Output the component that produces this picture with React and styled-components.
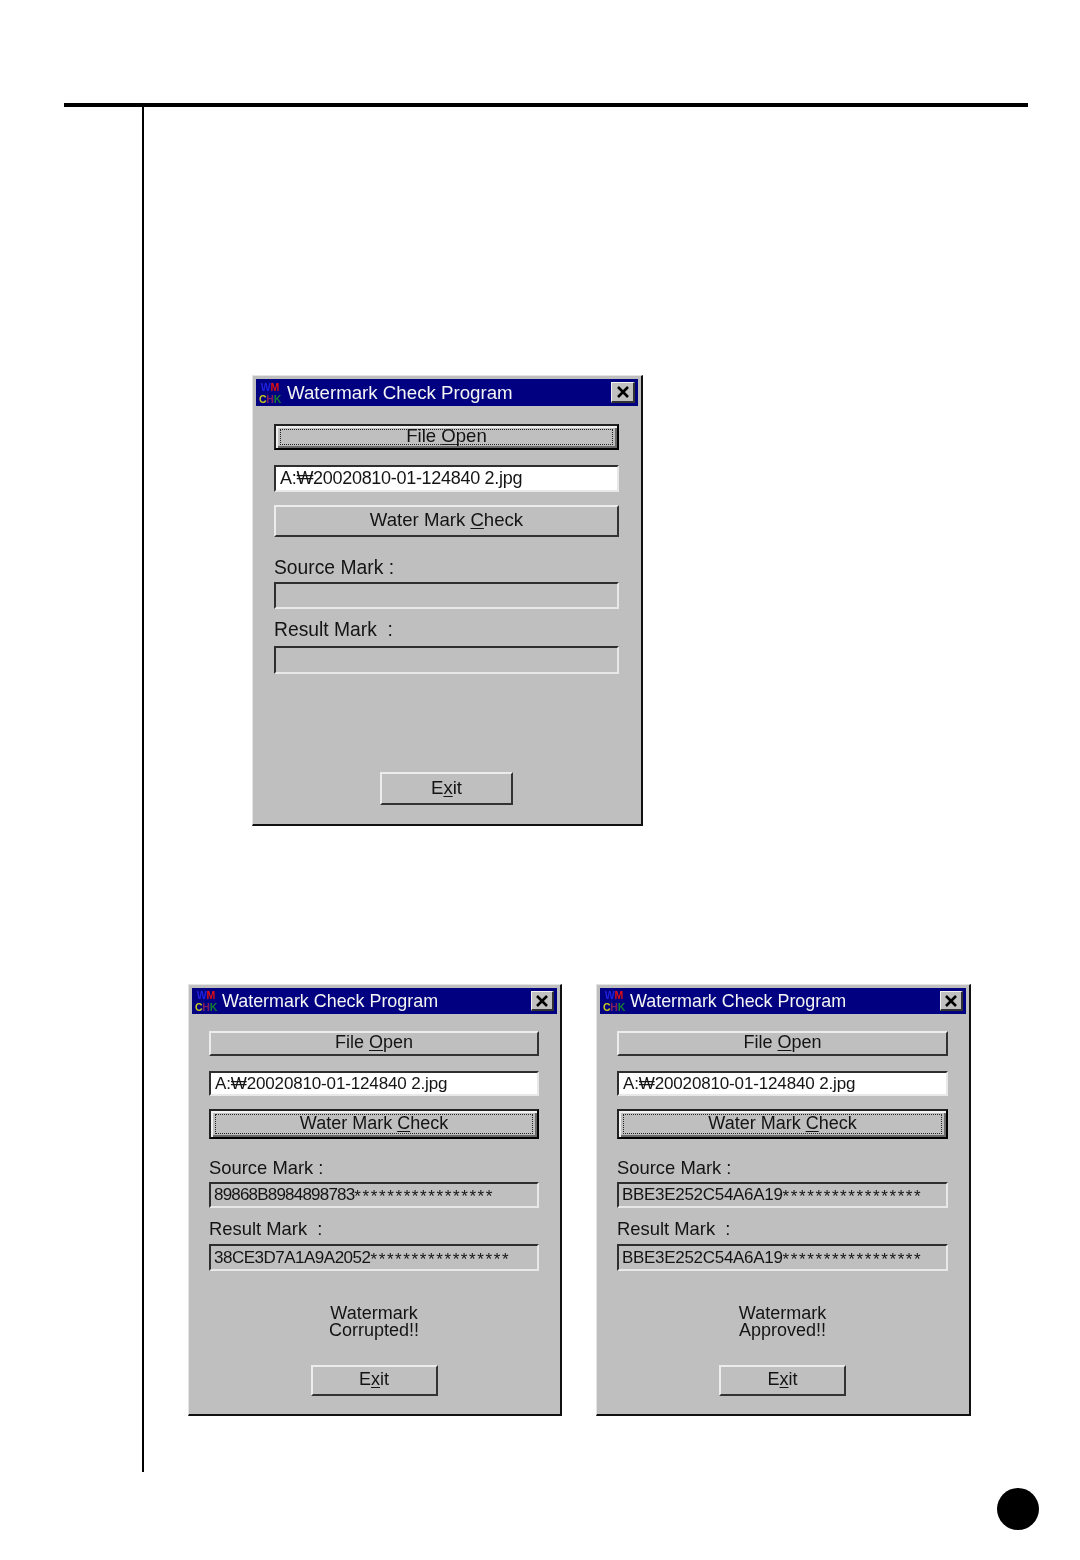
import React from 'react'
import styled, { createGlobalStyle, ThemeProvider } from 'styled-components'

const GlobalStyle = createGlobalStyle`
  html, body {
    margin: 0;
    padding: 0;
    background: #fff;
  }
  #root {
    width: 1080px;
    height: 1560px;
    overflow: hidden;
  }
`

// the top dialog is a slightly bigger scan than the two below it
const large = {
  width: 391,
  height: 451,
  fieldLeft: 18,
  fieldWidth: 345,
  titleHeight: 27,
  titleSize: 18.7,
  titleGap: 5,
  labelSize: 19.3,
  buttonSize: 18.6,
  inputSize: 18,
  inputSpacing: -0.3,
  exitWidth: 133,
  exitHeight: 33,
  closeWidth: 24,
  closeHeight: 21,
  gaps: { open: 18, input: 15, check: 13, source: 21, result: 11 },
  heights: { open: 26, input: 27, check: 32, source: 27, result: 28 },
  fieldGap: 4,
  resultGap: 6,
}

const small = {
  width: 374,
  height: 432,
  fieldLeft: 17,
  fieldWidth: 330,
  titleHeight: 26,
  titleSize: 17.9,
  titleGap: 4,
  labelSize: 18.4,
  buttonSize: 18,
  inputSize: 17,
  inputSpacing: -0.15,
  exitWidth: 127,
  exitHeight: 31,
  closeWidth: 23,
  closeHeight: 20,
  gaps: { open: 17, input: 15, check: 13, source: 19, result: 11 },
  heights: { open: 25, input: 25, check: 30, source: 26, result: 27 },
  fieldGap: 4,
  resultGap: 5,
}

const Page = styled.div`
  width: 1080px;
  padding-top: 103px;
  font-family: 'Liberation Sans', Arial, sans-serif;
`

const TopRule = styled.div`
  width: 964px;
  height: 4px;
  margin-left: 64px;
  background: #000;
`

const Column = styled.main`
  display: flow-root;
  width: 936px;
  height: 1365px;
  margin-left: 142px;
  border-left: 2px solid #000;
  box-sizing: border-box;
`

const LoneDialog = styled.div`
  margin: 268px 0 158px 108px;
`

const DialogRow = styled.div`
  display: flex;
  gap: 34px;
  margin-left: 44px;
`

const PageDot = styled.div`
  width: 42px;
  height: 42px;
  margin: 16px 0 0 997px;
  border-radius: 50%;
  background: #000;
`

const Win = styled.section`
  width: ${(p) => p.theme.width}px;
  height: ${(p) => p.theme.height}px;
  box-sizing: border-box;
  padding: 3px 3px 0 3px;
  background: #bfbfbf;
  border-style: solid;
  border-width: 1px 2px 2px 1px;
  border-color: #e4e4e4 #111 #111 #e4e4e4;
  color: #141414;
  filter: blur(0.35px);
`

const TitleBar = styled.header`
  display: flex;
  align-items: center;
  height: ${(p) => p.theme.titleHeight}px;
  padding: 0 3px 0 2px;
  background: #000080;
  color: #f4f4f4;
  font-size: ${(p) => p.theme.titleSize}px;
`

const AppIcon = styled.div`
  display: flex;
  flex-direction: column;
  align-items: center;
  justify-content: center;
  width: 24px;
  height: 24px;
  margin-right: ${(p) => p.theme.titleGap}px;
  font-weight: bold;
  white-space: nowrap;
`

const IconRow = styled.div`
  font-size: 10.5px;
  line-height: 12px;
  letter-spacing: -0.2px;
`

const IconLetter = styled.span`
  color: ${(p) => p.$color};
`

const TitleText = styled.h1`
  flex: 1;
  margin: 0;
  font: inherit;
  white-space: nowrap;
`

const CloseBox = styled.div`
  display: flex;
  align-items: center;
  justify-content: center;
  width: ${(p) => p.theme.closeWidth}px;
  height: ${(p) => p.theme.closeHeight}px;
  box-sizing: border-box;
  background: #c0c0c0;
  border-style: solid;
  border-width: 1px 2px 2px 1px;
  border-color: #f2f2f2 #333 #333 #f2f2f2;
`

const Body = styled.div`
  display: flex;
  flex-direction: column;
  width: ${(p) => p.theme.fieldWidth}px;
  margin-left: ${(p) => p.theme.fieldLeft}px;
`

const PushButton = styled.button`
  display: flex;
  align-items: center;
  justify-content: center;
  width: 100%;
  height: ${(p) => p.theme.heights[p.$slot]}px;
  margin: ${(p) => p.theme.gaps[p.$slot]}px 0 0;
  padding: 0 0 2px;
  box-sizing: border-box;
  position: relative;
  background: #bfbfbf;
  color: inherit;
  font-family: inherit;
  font-size: ${(p) => p.theme.buttonSize}px;
  border-style: solid;
  border-width: 2px;
  border-color: ${(p) =>
    p.$focused ? '#222 #000 #000 #222' : '#ececec #333 #333 #ececec'};
  box-shadow: ${(p) =>
    p.$focused
      ? 'inset 2px 2px 0 #f0f0f0, inset -2px -2px 0 #6a6a6a'
      : 'none'};
`

const FocusRing = styled.span`
  position: absolute;
  inset: 3px 4px;
  border: 1px dotted #222;
`

const ExitButton = styled(PushButton)`
  align-self: center;
  width: ${(p) => p.theme.exitWidth}px;
  height: ${(p) => p.theme.exitHeight}px;
  margin-top: ${(p) => p.$gap}px;
`

const Key = styled.u`
  text-underline-offset: 2px;
`

const Sunken = styled.div`
  display: flex;
  align-items: center;
  height: ${(p) => p.theme.heights[p.$slot]}px;
  margin-top: ${(p) => p.$gap}px;
  padding-left: ${(p) => (p.$white ? 4 : 3)}px;
  box-sizing: border-box;
  background: ${(p) => (p.$white ? '#fff' : '#bfbfbf')};
  font-size: ${(p) => p.theme.inputSize}px;
  letter-spacing: ${(p) => (p.$white ? p.theme.inputSpacing : 0)}px;
  white-space: pre;
  border-style: solid;
  border-width: 2px;
  border-color: #2e2e2e #e8e8e8 #e8e8e8 #2e2e2e;
`

const FieldLabel = styled.div`
  height: 20px;
  margin-top: ${(p) => p.theme.gaps[p.$slot]}px;
  font-size: ${(p) => p.theme.labelSize}px;
  line-height: 20px;
  white-space: pre;
`

const MarkCode = styled.span`
  letter-spacing: ${(p) => p.$tight}px;
`

const Stars = styled.span`
  position: relative;
  top: 2px;
  letter-spacing: 1.6px;
  font-size: 17px;
`

const Verdict = styled.p`
  height: 35px;
  margin: 34px 0 0;
  font-size: 18px;
  line-height: 17px;
  text-align: center;
`

const X = () => (
  <svg width="14" height="12" viewBox="0 0 14 12">
    <path d="M2 1 L12 11 M12 1 L2 11" stroke="#000" strokeWidth="2.6" fill="none" />
  </svg>
)

const TitleLogo = () => (
  <AppIcon>
    <IconRow>
      <IconLetter $color="#2222dd">W</IconLetter>
      <IconLetter $color="#e01010">M</IconLetter>
    </IconRow>
    <IconRow>
      <IconLetter $color="#c8c820">C</IconLetter>
      <IconLetter $color="#802060">H</IconLetter>
      <IconLetter $color="#108030">K</IconLetter>
    </IconRow>
  </AppIcon>
)

const Mark = ({ value }) =>
  value ? (
    <>
      <MarkCode $tight={value.tight}>{value.code}</MarkCode>
      <Stars>*****************</Stars>
    </>
  ) : null

const Dialog = ({ metrics, focus, source, result, verdict }) => (
  <ThemeProvider theme={metrics}>
    <Win>
      <TitleBar>
        <TitleLogo />
        <TitleText>Watermark Check Program</TitleText>
        <CloseBox>
          <X />
        </CloseBox>
      </TitleBar>
      <Body>
        <PushButton $slot="open" $focused={focus === 'open'}>
          {focus === 'open' && <FocusRing />}
          File&nbsp;<Key>O</Key>pen
        </PushButton>
        <Sunken $slot="input" $white $gap={metrics.gaps.input}>
          A:₩20020810-01-124840 2.jpg
        </Sunken>
        <PushButton $slot="check" $focused={focus === 'check'}>
          {focus === 'check' && <FocusRing />}
          Water Mark&nbsp;<Key>C</Key>heck
        </PushButton>
        <FieldLabel $slot="source">Source Mark :</FieldLabel>
        <Sunken $slot="source" $gap={metrics.fieldGap}>
          <Mark value={source} />
        </Sunken>
        <FieldLabel $slot="result">Result Mark  :</FieldLabel>
        <Sunken $slot="result" $gap={metrics.resultGap}>
          <Mark value={result} />
        </Sunken>
        {verdict && (
          <Verdict>
            Watermark
            <br />
            {verdict}
          </Verdict>
        )}
        <ExitButton $slot="open" $gap={verdict ? 25 : 98}>
          E<Key>x</Key>it
        </ExitButton>
      </Body>
    </Win>
  </ThemeProvider>
)

export default function App() {
  return (
    <>
      <GlobalStyle />
      <Page>
        <TopRule />
        <Column>
          <LoneDialog>
            <Dialog metrics={large} focus="open" />
          </LoneDialog>
          <DialogRow>
            <Dialog
              metrics={small}
              focus="check"
              source={{ code: '89868B8984898783', tight: -0.8 }}
              result={{ code: '38CE3D7A1A9A2052', tight: -0.5 }}
              verdict="Corrupted!!"
            />
            <Dialog
              metrics={{ ...small, width: 375, fieldWidth: 331 }}
              focus="check"
              source={{ code: 'BBE3E252C54A6A19', tight: -0.3 }}
              result={{ code: 'BBE3E252C54A6A19', tight: -0.3 }}
              verdict="Approved!!"
            />
          </DialogRow>
        </Column>
        <PageDot />
      </Page>
    </>
  )
}
